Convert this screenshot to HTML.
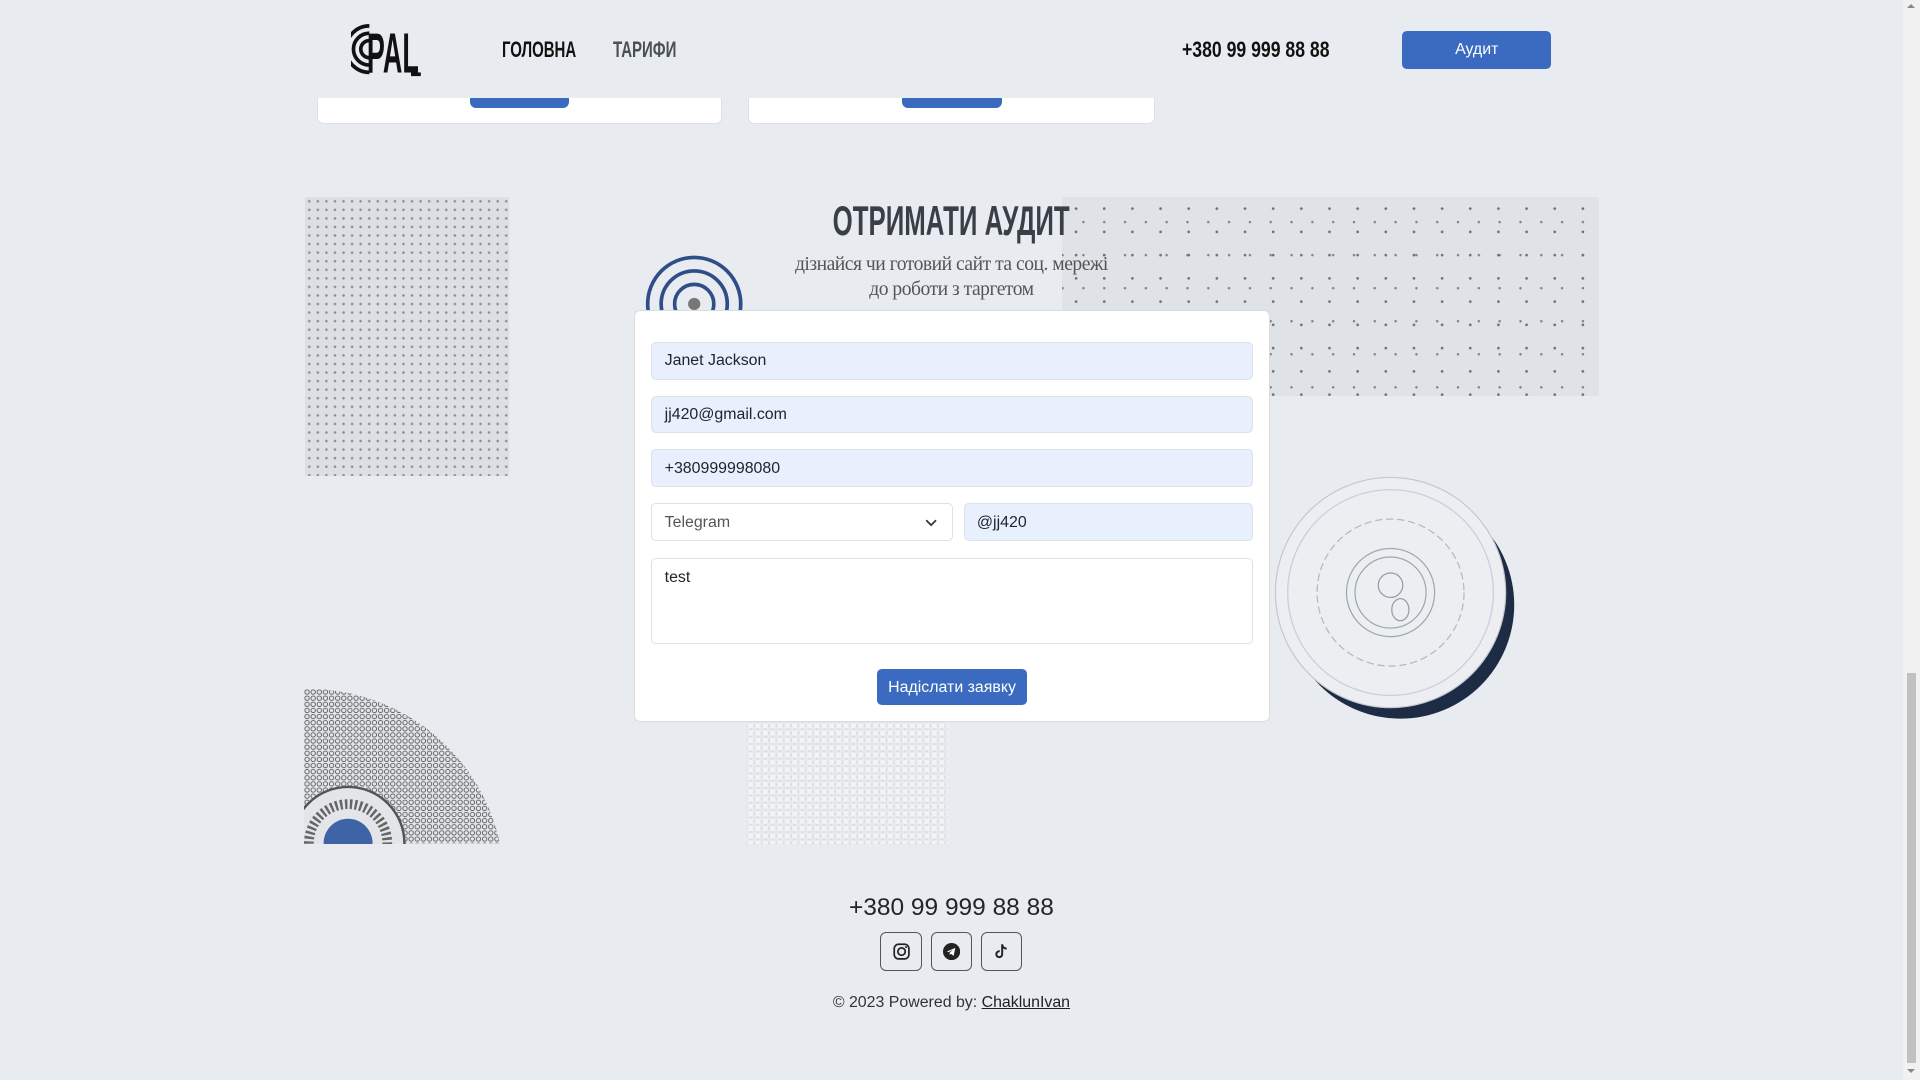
<!DOCTYPE html>
<html><head><meta charset="utf-8"><style>
html{zoom:1.22449}
*{box-sizing:border-box;margin:0;padding:0}
body{width:1568px;height:882px;background:#e8ebf0;font-family:"Liberation Sans",sans-serif;position:relative;overflow:hidden;color:#212529}
.abs{position:absolute}
.card{background:#fff;border-radius:0 0 5px 5px;border:1px solid #dde0e5;border-top:none}
.bbtn{background:#3a6bc0;border-radius:0 0 5px 5px}
.cond{display:inline-block;font-weight:bold;transform-origin:left center}
.inp{position:absolute;height:31px;border:1px solid #dee2e6;border-radius:4px;background:#e8f0fe;font-size:13px;padding:8px 10px;color:#212529}
.dots1{background-color:#dcdfe4;background-image:radial-gradient(circle,#8a8f98 0.9px,transparent 1.2px);background-size:7px 7px}
.dots2{background-color:#dfe2e6;background-image:radial-gradient(circle,#6b7079 0.9px,transparent 1.3px),radial-gradient(circle,#7b8089 0.8px,transparent 1.2px);background-size:23px 19px,17px 27px;background-position:0 0,9px 7px}
.tex{background-color:#d0d3d8;background-image:radial-gradient(circle,#f2f3f5 2px,transparent 2.7px),radial-gradient(circle,#e6e8eb 2px,transparent 2.7px);background-size:6px 6px,6px 6px;background-position:0 0,3px 3px}
.ib{position:absolute;top:761px;width:34px;height:32px;border:1px solid #555;border-radius:5px;display:flex;align-items:center;justify-content:center}
</style></head><body>
<div class="abs card" style="left:259px;top:60px;width:331px;height:41px"></div>
<div class="abs card" style="left:611px;top:60px;width:332px;height:41px"></div>
<div class="abs" style="left:0;top:0;width:1554px;height:80px;background:#e8ebf0"></div>
<div class="abs card" style="left:259px;top:80px;width:331px;height:21px"></div>
<div class="abs card" style="left:611px;top:80px;width:332px;height:21px"></div>
<div class="abs bbtn" style="left:384px;top:80px;width:81px;height:8px"></div>
<div class="abs bbtn" style="left:737px;top:80px;width:81px;height:8px"></div>

<svg class="abs" style="left:287px;top:17px" width="60" height="48" viewBox="0 0 60 48">
<path d="M15 4 A19 19 0 0 0 15 42" fill="none" stroke="#111" stroke-width="3"/>
<path d="M15 10 A13 13 0 0 0 15 36" fill="none" stroke="#111" stroke-width="3"/>
<path d="M15 16 A7 7 0 0 0 15 30" fill="none" stroke="#111" stroke-width="3"/>
<text x="0" y="0" font-family="Liberation Sans" font-weight="bold" font-size="44" fill="#111" transform="translate(13,42) scale(0.5,1.05)">PAL</text>
<rect x="49" y="42" width="8" height="3" fill="#111"/>
</svg>
<div class="abs" style="left:410px;top:30px;font-size:18px;color:#111"><span class="cond" style="transform:scaleX(0.68)">ГОЛОВНА</span></div>
<div class="abs" style="left:501px;top:30px;font-size:18px;color:#4a4f58"><span class="cond" style="transform:scaleX(0.68)">ТАРИФИ</span></div>
<div class="abs" style="left:965px;top:30px;font-size:18px;color:#111"><span class="cond" style="transform:scaleX(0.8);white-space:nowrap">+380 99 999 88 88</span></div>
<div class="abs" style="left:1145px;top:25px;width:122px;height:31px;background:#3a6bc0;border-radius:4px;color:#fff;font-size:13px;text-align:center;line-height:31px">Аудит</div>

<div class="abs dots1" style="left:249px;top:161px;width:167px;height:228px"></div>
<div class="abs dots2" style="left:867px;top:161px;width:439px;height:162px"></div>
<div class="abs" style="left:490px;top:160px;width:377px;height:95px;background:#e8ebf0;opacity:.85"></div>
<svg class="abs" style="left:526px;top:208px" width="84" height="47"><g fill="none" stroke="#2f4d86" stroke-width="3"><circle cx="41" cy="40" r="38"/><circle cx="41" cy="40" r="27"/><circle cx="41" cy="40" r="16"/></g><circle cx="41" cy="40" r="5" fill="#777"/></svg>
<svg class="abs" style="left:1040px;top:388px" width="200" height="202">
<ellipse cx="104" cy="106" rx="93" ry="93" fill="#1d2b44"/>
<circle cx="96" cy="96" r="94" fill="#eceef2" stroke="#c4c8cf" stroke-width="1"/>
<circle cx="96" cy="96" r="84" fill="none" stroke="#ccd" /><circle cx="96" cy="96" r="60" fill="none" stroke="#b4b8c0" stroke-dasharray="6 3"/>
<circle cx="96" cy="96" r="36" fill="none" stroke="#9aa"/><circle cx="96" cy="96" r="29" fill="none" stroke="#9aa"/>
<circle cx="96" cy="90" r="10" fill="none" stroke="#99a"/><ellipse cx="104" cy="110" rx="7" ry="9" fill="none" stroke="#99a"/>
</svg>
<svg class="abs" style="left:248px;top:563px" width="161" height="126" viewBox="0 0 161 126">
<defs><pattern id="p" width="5" height="5" patternUnits="userSpaceOnUse"><circle cx="2.5" cy="2.5" r="1.8" fill="none" stroke="#555" stroke-width="0.7"/></pattern></defs>
<path d="M0 0 A160 160 0 0 1 160 126 L0 126Z" fill="#e3e5e9"/>
<path d="M0 0 A160 160 0 0 1 160 126 L0 126Z" fill="url(#p)"/>
<circle cx="36" cy="126" r="46" fill="#e3e5e9" stroke="#555" stroke-width="2"/>
<circle cx="36" cy="126" r="32" fill="none" stroke="#666" stroke-width="8" stroke-dasharray="2 2"/>
<circle cx="36" cy="126" r="20" fill="#3e64a6"/>
</svg>
<div class="abs tex" style="left:610px;top:590px;width:164px;height:99px"></div>

<div class="abs" style="left:0;width:1554px;top:163px;text-align:center;font-size:34px;color:#3a3f47;line-height:34px"><span class="cond" style="transform:scaleX(0.62);transform-origin:center">ОТРИМАТИ АУДИТ</span></div>
<div class="abs" style="left:0;width:1554px;top:207px;text-align:center;font-family:'Liberation Serif',serif;font-size:16px;line-height:20px;color:#555;letter-spacing:-0.4px">дізнайся чи готовий сайт та соц. мережі<br>до роботи з таргетом</div>

<div class="abs" style="left:518px;top:253px;width:519px;height:337px;background:#fff;border:1px solid #d8dbe0;border-radius:5px"></div>
<div class="inp" style="left:532px;top:279px;width:491px">Janet Jackson</div>
<div class="inp" style="left:532px;top:323px;width:491px">jj420@gmail.com</div>
<div class="inp" style="left:532px;top:367px;width:491px">+380999998080</div>
<div class="inp" style="left:532px;top:411px;width:246px;background:#fff;color:#555">Telegram<svg style="position:absolute;right:12px;top:12px" width="10" height="7"><path d="M1 1l4 4 4-4" fill="none" stroke="#333" stroke-width="1.4"/></svg></div>
<div class="inp" style="left:787px;top:411px;width:236px">@jj420</div>
<div class="inp" style="left:532px;top:456px;width:491px;height:70px;background:#fff">test</div>
<div class="abs" style="left:716px;top:546px;width:123px;height:30px;background:#3a6bc0;border-radius:4px;color:#fff;font-size:13px;text-align:center;line-height:31px">Надіслати заявку</div>

<div class="abs" style="left:0;width:1554px;top:730px;text-align:center;font-size:20px;color:#212529">+380 99 999 88 88</div>
<div class="ib" style="left:719px"><svg width="14" height="14"><rect x="1" y="1" width="12" height="12" rx="3.5" fill="none" stroke="#222" stroke-width="1.4"/><circle cx="7" cy="7" r="3" fill="none" stroke="#222" stroke-width="1.4"/><circle cx="10.6" cy="3.4" r=".8" fill="#222"/></svg></div>
<div class="ib" style="left:760px"><svg width="14" height="14"><circle cx="7" cy="7" r="7" fill="#222"/><path d="M3 7l7-3-1.3 6.5-2.3-1.7-1 1 .1-1.9 2.8-2.6-3.4 2.1z" fill="#fff"/></svg></div>
<div class="ib" style="left:801px"><svg width="14" height="14"><path d="M7.5 1v8.2a2.4 2.4 0 1 1-2-2.4" fill="none" stroke="#222" stroke-width="1.6"/><path d="M7.5 1.5c.5 2 1.7 3 3.7 3.1" fill="none" stroke="#222" stroke-width="1.6"/></svg></div>
<div class="abs" style="left:0;width:1554px;top:812px;text-align:center;font-size:13px;color:#333">© 2023 Powered by: <span style="text-decoration:underline;color:#222">ChaklunIvan</span></div>

<div class="abs" style="left:1554px;top:0;width:14px;height:882px;background:#f1f1f1"></div>
<div class="abs" style="left:1557px;top:550px;width:8px;height:318px;background:#c1c1c1"></div>
<div class="abs" style="left:1557px;top:3px;width:0;height:0;border:4px solid transparent;border-bottom-color:#888;border-top:none"></div>
<div class="abs" style="left:1557px;top:873px;width:0;height:0;border:4px solid transparent;border-top-color:#888;border-bottom:none"></div>
</body></html>
